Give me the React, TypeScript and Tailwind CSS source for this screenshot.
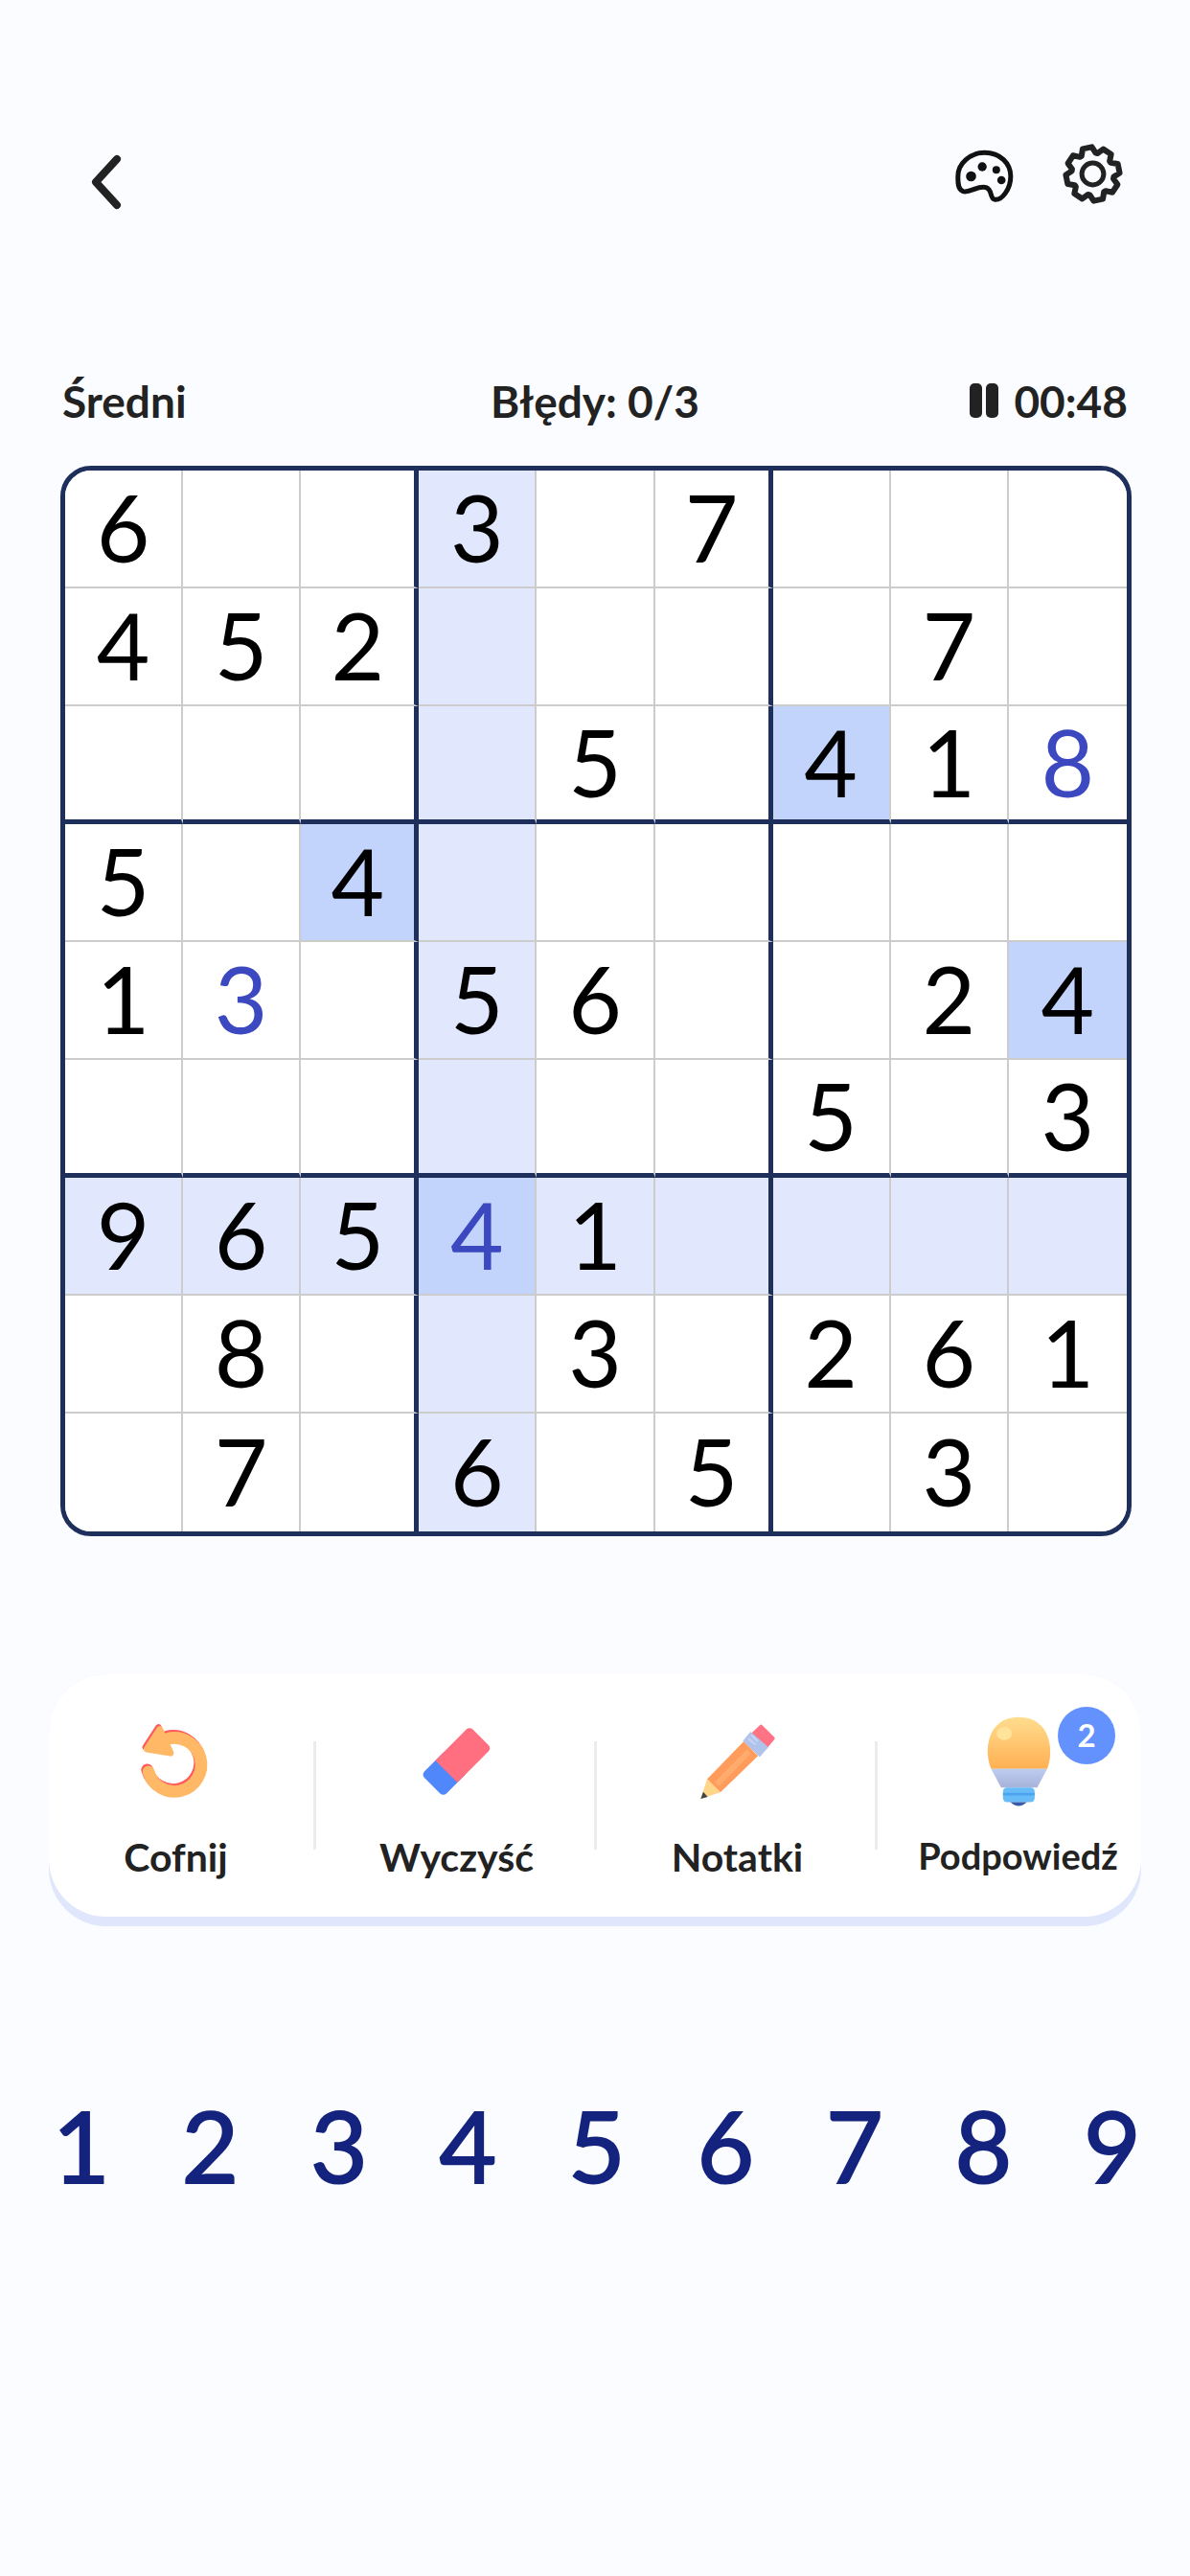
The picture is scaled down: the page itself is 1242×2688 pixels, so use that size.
const rows = [
  "6  3 7   ",
  "452    7 ",
  "    5 418",
  "5 4      ",
  "13 56  24",
  "      5 3",
  "96541    ",
  " 8  3 261",
  " 7 6 5 3 ",
];

const playerCells = ["2-8", "4-1", "6-3"];
const matchCells = ["2-6", "3-2", "4-8", "6-3"];

function cellBg(r: number, c: number) {
  if (matchCells.includes(`${r}-${c}`)) return "bg-[#c3d4fc]";
  if (r === 6 || c === 3) return "bg-[#e1e7fc]";
  return "bg-white";
}

function gearPoints() {
  const pts: string[] = [];
  for (let i = 0; i < 8; i++) {
    const a = (i * 45 - 12) * (Math.PI / 180);
    const at = (r: number, d: number) => {
      const t = a + (d * Math.PI) / 180;
      return `${(100 + r * Math.cos(t)).toFixed(1)},${(100 + r * Math.sin(t)).toFixed(1)}`;
    };
    pts.push(at(66, -20), at(84, -10), at(84, 10), at(66, 20));
  }
  return pts.join(" ");
}

function UndoIcon() {
  return (
    <svg viewBox="80 50 225 245" className="w-[75px] h-[82px]">
      <g transform="translate(-4 -6)" fill="#ff5a5c" stroke="#ff5a5c">
        <path d="M165 102 A84 84 0 1 1 107 205" fill="none" strokeWidth="38" strokeLinecap="round" />
        <polygon points="142,72 102,134 176,146" strokeWidth="20" strokeLinejoin="round" />
      </g>
      <g fill="#ffb866" stroke="#ffb866">
        <path d="M165 102 A84 84 0 1 1 107 205" fill="none" strokeWidth="38" strokeLinecap="round" />
        <polygon points="142,72 102,134 176,146" strokeWidth="20" strokeLinejoin="round" />
      </g>
    </svg>
  );
}

function EraserIcon() {
  return (
    <svg viewBox="40 50 250 245" className="w-[83px] h-[82px]">
      <g transform="rotate(-45 165 172)">
        <rect x="57" y="123" width="110" height="98" rx="14" fill="#5087fb" />
        <path d="M120 123 H258 A14 14 0 0 1 272 137 V207 A14 14 0 0 1 258 221 H120 Z" fill="#ff6f7f" />
      </g>
    </svg>
  );
}

function PencilIcon() {
  return (
    <svg viewBox="50 50 250 245" className="w-[83px] h-[82px]">
      <polygon points="250,62 288,100 268,124 226,84" fill="#ff7385" stroke="#ff7385" strokeWidth="10" strokeLinejoin="round" />
      <polygon points="217,82 270,128 245,156 195,108" fill="#b0c3ea" stroke="#b0c3ea" strokeWidth="4" strokeLinejoin="round" />
      <path d="M210 100 L232 120 M220 90 L240 110" stroke="#c7d6f4" strokeWidth="6" />
      <polygon points="195,110 240,155 122,270 80,228" fill="#ff9c5c" />
      <polygon points="205,135 218,148 118,250 104,238" fill="#ffab6e" />
      <polygon points="80,228 122,270 60,290" fill="#ffd58a" />
      <polygon points="68,268 82,284 60,290" fill="#444444" />
    </svg>
  );
}

function BulbIcon() {
  return (
    <svg viewBox="45 60 220 285" className="w-[76px] h-[98px]">
      <defs>
        <linearGradient id="glass" x1="0" y1="0" x2="0" y2="1">
          <stop offset="0" stopColor="#ffdd8e" />
          <stop offset="1" stopColor="#ffb053" />
        </linearGradient>
        <linearGradient id="socket" x1="0" y1="0" x2="0" y2="1">
          <stop offset="0" stopColor="#bccdef" />
          <stop offset="1" stopColor="#a8b2da" />
        </linearGradient>
      </defs>
      <path d="M72 225 C48 170 60 68 156 68 C252 68 264 170 242 225 Z" fill="url(#glass)" />
      <ellipse cx="112" cy="118" rx="23" ry="20" fill="#ffe39b" />
      <polygon points="72,225 242,225 212,282 102,282" fill="url(#socket)" />
      <rect x="108" y="282" width="96" height="44" rx="12" fill="#67bcf7" />
      <rect x="108" y="298" width="96" height="8" fill="#4ca4ee" />
      <path d="M130 326 H180 Q156 350 130 326 Z" fill="#3a5aa8" />
    </svg>
  );
}

const tools = [
  { label: "Cofnij", icon: <UndoIcon />, text: "text-[41px]" },
  { label: "Wyczyść", icon: <EraserIcon />, text: "text-[41px]" },
  { label: "Notatki", icon: <PencilIcon />, text: "text-[41px]" },
  { label: "Podpowiedź", icon: <BulbIcon />, text: "text-[38px]" },
];

export default function App() {
  return (
    <div className="min-h-[2688px] bg-[#fbfcff] font-['Lato','Noto_Sans',sans-serif] text-[#222222]">
      <header className="h-[374px] pt-[148px] pl-[92px] pr-[68px] flex justify-between items-start">
        <svg viewBox="0 0 40 60" className="w-[40px] h-[60px] mt-[12px]" fill="none" stroke="#222222" strokeWidth="8" strokeLinecap="round" strokeLinejoin="round">
          <path d="M30 6 L8 30 L30 54" />
        </svg>
        <div className="flex items-center gap-[46px]">
          <svg viewBox="95 85 200 180" className="w-[67px] h-[60px] mt-[4px]" fill="none" stroke="#111111" strokeWidth="15" strokeLinejoin="round">
            <path d="M195 101 C245 101 277 135 277 175 C277 215 250 250 228 248 C210 246 222 218 200 210 C175 202 150 228 128 222 C110 216 112 190 112 175 C112 135 150 101 195 101 Z" />
            <circle cx="153" cy="175" r="16" fill="#111111" stroke="none" />
            <circle cx="188" cy="145" r="14" fill="#111111" stroke="none" />
            <circle cx="232" cy="155" r="12" fill="#111111" stroke="none" />
            <circle cx="248" cy="187" r="13" fill="#111111" stroke="none" />
          </svg>
          <svg viewBox="0 0 200 200" className="w-[67px] h-[67px]" fill="none" stroke="#222222" strokeWidth="18" strokeLinejoin="round">
            <polygon points={gearPoints()} />
            <circle cx="100" cy="100" r="34" strokeWidth="15" />
          </svg>
        </div>
      </header>

      <div className="h-[112px] px-[65px] pb-[24px] grid grid-cols-3 items-center text-[46px] font-bold">
        <span>Średni</span>
        <span className="text-center">Błędy: 0/3</span>
        <span className="flex justify-end items-center gap-[16px]">
          <span className="flex gap-[4px]">
            <span className="w-[13px] h-[36px] rounded-[5px] bg-[#222222]" />
            <span className="w-[13px] h-[36px] rounded-[5px] bg-[#222222]" />
          </span>
          00:48
        </span>
      </div>

      <div className="ml-[63px] w-[1118px] h-[1117px] grid grid-cols-9 grid-rows-9 border-[5px] border-[#1f2f5c] rounded-[32px] overflow-hidden bg-white">
        {rows.map((row, r) =>
          row.split("").map((value, c) => (
            <div
              key={`${r}-${c}`}
              className={`flex items-center justify-center pb-[3px] text-[96px] leading-none ${cellBg(r, c)} ${
                c === 8 ? "" : c === 2 || c === 5 ? "border-r-[5px] border-r-[#1f2f5c]" : "border-r-2 border-r-[#cccccc]"
              } ${r === 8 ? "" : r === 2 || r === 5 ? "border-b-[5px] border-b-[#1f2f5c]" : "border-b-2 border-b-[#cccccc]"} ${
                playerCells.includes(`${r}-${c}`) ? "text-[#3c48c0]" : "text-black"
              }`}
            >
              {value.trim()}
            </div>
          ))
        )}
      </div>

      <div className="mt-[144px] ml-[51px] w-[1140px] h-[263px] pb-[10px] rounded-[60px] bg-[#e0e7fc]">
        <div className="h-[253px] rounded-[60px] bg-white flex items-start">
          <div className="-ml-[14px] flex h-full">
            {tools.map((tool, i) => (
              <div key={tool.label} className="relative w-[293px] h-full flex flex-col items-center">
                <div className="h-[182px] flex items-center justify-center">{tool.icon}</div>
                <span className={`${tool.text} font-bold leading-none -mt-[12px]`}>{tool.label}</span>
                {i < 3 && <span className="absolute right-0 top-[70px] h-[113px] w-[3px] bg-[#ececec]" />}
                {i === 3 && (
                  <span className="absolute left-[188px] top-[34px] w-[60px] h-[60px] rounded-full bg-[#6392ff] text-white text-[33px] font-bold flex items-center justify-center">
                    2
                  </span>
                )}
              </div>
            ))}
          </div>
        </div>
      </div>

      <div className="mt-[177px] px-[55px] flex justify-between text-[103px] leading-none text-[#14237e] [-webkit-text-stroke:2px_#14237e]">
        {"123456789".split("").map((n) => (
          <span key={n} className="w-[56px] text-center">{n}</span>
        ))}
      </div>
    </div>
  );
}
